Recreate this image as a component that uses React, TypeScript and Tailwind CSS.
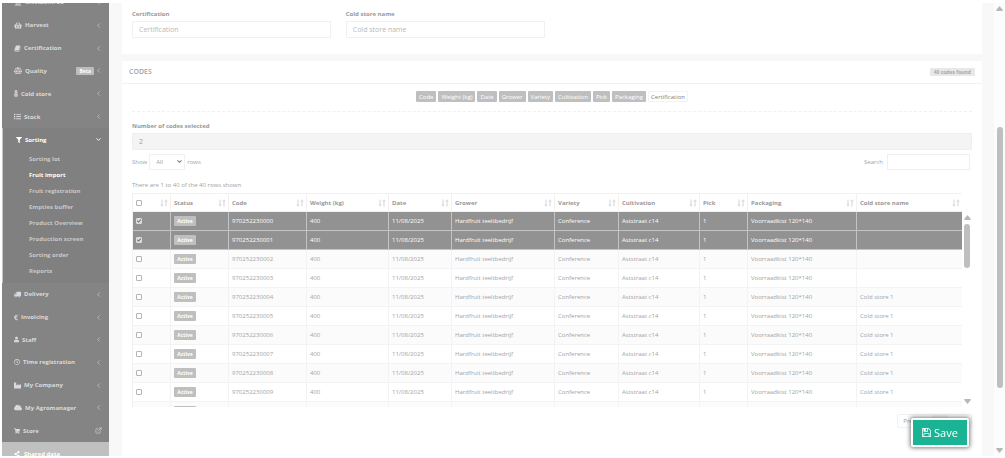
import type { ReactNode } from "react"
import {
    FaBalanceScale, FaCheck, FaCloud, FaEuroSign, FaFilter, FaIndustry, FaList,
    FaLongArrowAltDown, FaLongArrowAltUp, FaRegClock, FaShareAlt, FaShoppingBasket, FaShoppingCart,
    FaThermometerFull, FaTruck, FaUniversity, FaUser,
} from "react-icons/fa"
import { FiChevronDown, FiChevronLeft, FiExternalLink } from "react-icons/fi"

const BookIcon = () => {
    return <svg viewBox="0 0 1792 1792" fill="currentColor" className="size-[7px]">
        <path d="M1703 478q40 57 18 129l-275 906q-19 64-76.5 107.5t-122.5 43.5h-923q-77 0-148.5-53.5t-99.5-131.5q-24-67-2-127 0-4 3-27t4-37q1-8-3-21.5t-3-19.5q2-11 8-21t16.5-23.5 16.5-23.5q23-38 45-91.5t30-91.5q3-10 .5-30t-.5-28q3-11 17-28t17-23q21-36 42-92t25-90q1-9-2.5-32t.5-28q4-13 22-30.5t22-22.5q19-26 42.5-84.5t27.5-96.5q1-8-3-25.5t-2-26.5q2-8 9-18t18-23 17-21q8-12 16.5-30.5t15-35 16-36 19.5-32 26.5-23.5 36-11.5 47.5 5.5l-1 3q38-9 51-9h761q74 0 114 56t18 130l-274 906q-36 119-71.5 153.5t-128.5 34.5h-869q-27 0-38 15-11 16-1 43 24 70 144 70h923q29 0 56-15.5t35-41.5l300-987q7-22 5-57 38 15 59 43z" />
    </svg>
}

const SaveIcon = () => {
    return <svg viewBox="128 128 1536 1536" fill="currentColor" className="size-[9px]">
        <path d="M512 1536h768v-384h-768v384zm896 0h128v-896q0-14-10-38.5t-20-34.5l-281-281q-10-10-34-20t-39-10v416q0 40-28 68t-68 28h-576q-40 0-68-28t-28-68v-416h-128v1280h128v-416q0-40 28-68t68-28h832q40 0 68 28t28 68v416zm-384-928v-320q0-13-9.5-22.5t-22.5-9.5h-192q-13 0-22.5 9.5t-9.500 22.5v320q0 13 9.5 22.5t22.5 9.5h192q13 0 22.5-9.5t9.5-22.5zm640 32v928q0 40-28 68t-68 28h-1344q-40 0-68-28t-28-68v-1344q0-40 28-68t68-28h928q40 0 88 20t76 48l280 280q28 28 48 76t20 88z" />
    </svg>
}

const topItems = [
    { label: "Mestbank BE", icon: <FaUniversity className="h-[7px] w-2" /> },
    { label: "Harvest", icon: <FaShoppingBasket className="h-[7px] w-2" /> },
    { label: "Certification", icon: <BookIcon /> },
    { label: "Quality", icon: <FaBalanceScale className="h-[7px] w-2" />, badge: "Beta" },
    { label: "Cold store", icon: <FaThermometerFull className="h-[7px] w-1" /> },
    { label: "Stock", icon: <FaList className="size-[7px]" /> },
]

const sortingItems = ["Sorting lot", "Fruit import", "Fruit registration", "Empties buffer", "Product Overview", "Production screen", "Sorting order", "Reports"]

const bottomItems = [
    { label: "Delivery", icon: <FaTruck className="size-[7px] -scale-x-100" /> },
    { label: "Invoicing", icon: <FaEuroSign className="h-[7px] w-1" /> },
    { label: "Staff", icon: <FaUser className="h-[7px] w-[5px]" /> },
    { label: "Time registration", icon: <FaRegClock className="size-[6px]" /> },
    { label: "My Company", icon: <FaIndustry className="size-[7px]" /> },
    { label: "My Agromanager", icon: <FaCloud className="h-[7px] w-2" /> },
    { label: "Store", icon: <FaShoppingCart className="size-[6px]" />, external: true },
]

const toggles = ["Code", "Weight (kg)", "Date", "Grower", "Variety", "Cultivation", "Pick", "Packaging"]

const columns = [
    { label: "Status", width: "w-[58px]" },
    { label: "Code", width: "w-[78px]" },
    { label: "Weight (kg)", width: "w-[82px]" },
    { label: "Date", width: "w-[63px]" },
    { label: "Grower", width: "w-[103px]" },
    { label: "Variety", width: "w-[64px]" },
    { label: "Cultivation", width: "w-[81px]" },
    { label: "Pick", width: "w-[48px]" },
    { label: "Packaging", width: "w-[109px]" },
    { label: "Cold store name", width: "w-[106px]" },
]

const rows = Array.from({ length: 11 }, (_, i) => ({
    code: String(970252230000 + i),
    selected: i < 2,
    store: i < 4 ? "" : "Cold store 1",
}))

interface NavItemProps {
    label: string
    icon: ReactNode
    badge?: string
    external?: boolean
}

const NavItem = ({ label, icon, badge, external }: NavItemProps) => {
    return <a href="#" className="flex items-center pl-3 pr-[7px] text-[#dadada]">
        <span className="mr-[3px]">{icon}</span>
        <span className="whitespace-nowrap">{label}</span>
        <span className="ml-auto flex items-center">
            {badge && <span className="mr-px rounded-[1px] bg-[#bdbdbd] px-[3px] text-[5px] leading-[8px] text-white">{badge}</span>}
            {external ? <FiExternalLink className="size-[7px]" /> : <FiChevronLeft className="size-[7px]" />}
        </span>
    </a>
}

const Sidebar = () => {
    return <nav className="w-[107px] shrink-0 overflow-hidden bg-[#848484] font-bold">
        <div className="-mt-3 grid h-[137px] auto-rows-fr">
            {topItems.map((item) => <NavItem key={item.label} {...item} />)}
        </div>
        <div className="border-l border-[#c4c4c4] bg-[#808080] pb-1">
            <a href="#" className="flex h-[23px] items-center pl-[13px] pr-[7px] text-white">
                <FaFilter className="mr-[3px] size-[6px]" />
                Sorting
                <FiChevronDown className="ml-auto size-[7px] stroke-3" />
            </a>
            {sortingItems.map((label) => (
                <a key={label} href="#" className={`flex h-4 items-center pl-[26px] ${label === "Fruit import" ? "text-white" : "text-[#c8c8c8]"}`}>
                    {label}
                </a>
            ))}
        </div>
        <div className="grid h-[159px] auto-rows-fr">
            {bottomItems.map((item) => <NavItem key={item.label} {...item} />)}
        </div>
        <a href="#" className="flex h-[23px] items-center bg-[#c0c0c0] pl-3 text-white">
            <FaShareAlt className="mr-1 size-[6px]" />
            Shared data
        </a>
    </nav>
}

const Field = ({ id, label }: { id: string, label: string }) => {
    return <div>
        <label htmlFor={id} className="block pb-[2px] font-bold text-[#999999]">{label}</label>
        <input id={id} placeholder={label} className="h-[17px] w-full border border-[#f1f1f1] px-[6px] text-[7px] outline-none placeholder:text-[#b8b8b8]" />
    </div>
}

const Tick = ({ label, checked }: { label: string, checked?: boolean }) => {
    return <span className="relative block size-[6px]">
        <input
            type="checkbox"
            aria-label={label}
            defaultChecked={checked}
            className="peer block size-[6px] appearance-none rounded-[1px] border border-[#b4b4b4] bg-white checked:border-[#dcdcdc] checked:bg-[#dcdcdc]"
        />
        <FaCheck className="pointer-events-none absolute left-px top-px hidden size-1 text-[#606060] peer-checked:block" />
    </span>
}

const SortIcon = () => {
    return <span className="-mr-px ml-auto flex pt-px text-[8px] text-[#dedede]">
        <FaLongArrowAltDown className="w-1" />
        <FaLongArrowAltUp className="w-1" />
    </span>
}

const ScrollBar = ({ thumb }: { thumb: string }) => {
    return <div aria-hidden="true" className="flex h-full flex-col items-center py-[3px] text-[#b8b8b8]">
        <svg viewBox="0 0 7 5" fill="currentColor" className="h-[5px] w-[7px] shrink-0">
            <path d="M3 .4Q3.500 0 4 .4L6.800 4Q7 5 6.200 5H.8Q0 5 .2 4Z" />
        </svg>
        <div className="w-[6px] flex-1">
            <div className={`w-full rounded-full bg-[#bfbfbf] ${thumb}`} />
        </div>
        <svg viewBox="0 0 7 5" fill="currentColor" className="h-[5px] w-[7px] shrink-0 rotate-180">
            <path d="M3 .4Q3.500 0 4 .4L6.800 4Q7 5 6.200 5H.8Q0 5 .2 4Z" />
        </svg>
    </div>
}

const CodesTable = () => {
    return <div className="flex h-[214px] overflow-hidden">
        <div className="min-w-0 flex-1 overflow-hidden">
            <table className="w-full table-fixed border-separate border-spacing-0 border-l border-t border-[#f1f1f1] text-left">
                <thead>
                    <tr className="h-[18px] text-[#999999]">
                        <th className="w-[38px] border-b border-r border-[#f1f1f1] px-[3px] py-0">
                            <div className="flex items-center">
                                <Tick label="Select all" />
                                <SortIcon />
                            </div>
                        </th>
                        {columns.map((col) => (
                            <th key={col.label} className={`border-b border-r border-[#f1f1f1] px-[3px] py-0 font-bold ${col.width}`}>
                                <div className="flex items-center whitespace-nowrap">
                                    {col.label}
                                    <SortIcon />
                                </div>
                            </th>
                        ))}
                    </tr>
                </thead>
                <tbody className="font-medium">
                    {rows.map((row, i) => {
                        const cell = row.selected ? "border-b border-r border-[#c4c4c4] px-[3px] py-0" : "border-b border-r border-[#f3f3f3] px-[3px] py-0"
                        const tone = row.selected ? "bg-[#929292] text-white" : i % 2 === 0 ? "bg-[#fbfbfb] text-[#a3a3a3]" : "bg-white text-[#a3a3a3]"
                        return <tr key={row.code} className={`h-[19px] whitespace-nowrap ${tone}`}>
                            <td className={cell}><Tick label={`Select ${row.code}`} checked={row.selected} /></td>
                            <td className={cell}>
                                <span className="block w-[22px] rounded-[1px] bg-[#bfbfbf] text-center text-[5px] font-bold leading-[10px] text-white">Active</span>
                            </td>
                            <td className={cell}>{row.code}</td>
                            <td className={cell}>400</td>
                            <td className={cell}>11/08/2025</td>
                            <td className={cell}>Hardfruit teeltbedrijf</td>
                            <td className={cell}>Conference</td>
                            <td className={cell}>Aststraat c14</td>
                            <td className={cell}>1</td>
                            <td className={cell}>Voorraadkist 120*140</td>
                            <td className={cell}>{row.store}</td>
                        </tr>
                    })}
                </tbody>
            </table>
        </div>
        <div className="w-[10px] pt-[19px]">
            <ScrollBar thumb="mt-1 h-[44px]" />
        </div>
    </div>
}

export default function App() {
    return <div className="flex h-screen overflow-hidden bg-white pb-[2px] pl-[2px] pt-[3px] font-['Open_Sans',sans-serif] text-[6px] leading-[10px] text-[#9f9f9f]">
        <Sidebar />
        <main className="min-w-0 flex-1 overflow-hidden bg-[#f8f8f8] pl-[13px] pr-3">
            <section className="mb-[7px] grid h-[51px] grid-cols-4 gap-[15px] bg-white px-[10px] pt-[6px]">
                <Field id="certification" label="Certification" />
                <Field id="store" label="Cold store name" />
            </section>

            <section className="bg-white">
                <header className="flex h-[23px] items-center justify-between border-b border-[#f1f1f1] px-[7px]">
                    <h2 className="text-[7px] font-semibold text-[#a3a3a3]">CODES</h2>
                    <span className="rounded-[1px] bg-[#e8e8e8] px-1 text-[5px] font-bold leading-[8px] text-[#a8a8a8]">40 codes found</span>
                </header>
                <div className="px-[10px]">
                    <div className="flex h-7 items-center justify-center gap-[2px] border-b border-dashed border-[#f1f1f1] pb-[2px]">
                        {toggles.map((label) => (
                            <button key={label} className="h-[11px] rounded-[1px] bg-[#bfbfbf] px-[3px] text-white">{label}</button>
                        ))}
                        <button className="h-[11px] rounded-[1px] border border-[#f3f3f3] px-[2px] text-[#808080]">Certification</button>
                    </div>

                    <label htmlFor="selected" className="block pb-[2px] pt-[9px] font-bold text-[#999999]">Number of codes selected</label>
                    <input id="selected" readOnly value="2" className="block h-[17px] w-full border border-[#efefef] bg-[#f4f4f4] px-[6px] text-[7px] outline-none" />

                    <div className="mt-1 flex items-center pr-[2px] font-medium">
                        <label htmlFor="rows">Show</label>
                        <span className="relative mx-[2px]">
                            <select id="rows" className="block h-4 w-9 appearance-none border border-[#f1f1f1] bg-white px-[6px]">
                                <option>All</option>
                            </select>
                            <FiChevronDown className="pointer-events-none absolute right-[2px] top-1 size-[7px] stroke-4 text-[#8c8c8c]" />
                        </span>
                        rows
                        <label htmlFor="search" className="ml-auto mr-1">Search</label>
                        <input id="search" className="h-4 w-[83px] border border-[#efefef] px-1 outline-none" />
                    </div>

                    <p className="pb-[3px] pt-[10px] font-medium">There are 1 to 40 of the 40 rows shown</p>
                    <CodesTable />

                    <div className="flex justify-end border-b border-dashed border-[#f1f1f1] pb-7 pt-[7px]">
                        <button className="h-[14px] rounded-l-[2px] border border-[#f1f1f1] px-[5px]">Previous</button>
                        <button className="h-[14px] border-y border-[#efefef] bg-[#f4f4f4] px-[5px]">1</button>
                        <button className="h-[14px] rounded-r-[2px] border border-[#f1f1f1] px-[5px]">Next</button>
                    </div>
                </div>
                <div className="h-3" />
            </section>
        </main>
        <div className="w-[11px] shrink-0 bg-[#fcfcfc]">
            <ScrollBar thumb="mt-[116px] h-[261px]" />
        </div>

        <button className="fixed bottom-[11px] right-9 flex h-[29px] w-[58px] items-center justify-center gap-[3px] rounded-[2px] border-2 border-white bg-[#1ab394] text-[11px] text-white shadow-[0_0_4px_1px_rgba(0,0,0,0.5)]">
            <SaveIcon />
            Save
        </button>
    </div>
}
